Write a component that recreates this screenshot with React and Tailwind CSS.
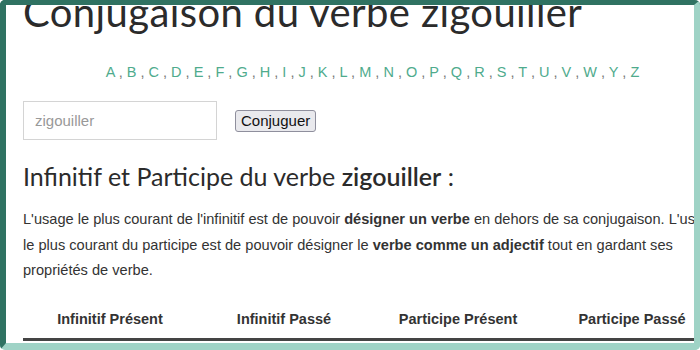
import React from 'react';

const letters = ['A', 'B', 'C', 'D', 'E', 'F', 'G', 'H', 'I', 'J', 'K', 'L', 'M', 'N', 'O', 'P', 'Q', 'R', 'S', 'T', 'U', 'V', 'W', 'Y', 'Z'];
const heads = ['Infinitif Présent', 'Infinitif Passé', 'Participe Présent', 'Participe Passé'];

export default function App() {
  return (
    <div className="w-[700px] h-[350px] bg-white">
      <div className="w-[700px] h-[350px] overflow-hidden rounded-[5px] border-t-[5px] border-l-[6px] border-r-[6px] border-b-[7px] border-t-[#2f7262] border-l-[#2f7262] border-r-[#9fd3c6] border-b-[#9fd3c6] bg-white">
        <div className="w-[700px] pl-[17px] -mt-[21px]" style={{ fontFamily: '"Liberation Sans", Arial, sans-serif' }}>
          <h1 className="text-[40px] leading-[56px] tracking-[0.4px] text-[#2b2b2b] whitespace-nowrap" style={{ fontFamily: 'Lato, "Noto Sans", sans-serif' }}>
            Conjugaison du verbe zigouiller
          </h1>

          <div className="mt-[22px] text-center text-[14.5px] leading-[20px] text-[#777] pl-[16px]">
            {letters.map((l, i) => (
              <span key={l}>
                <a className="text-[#4fab8d]">{l}</a>
                {i < letters.length - 1 && ' , '}
              </span>
            ))}
          </div>

          <div className="mt-[19px] flex items-center gap-[18px]">
            <input
              className="w-[194px] h-[39px] border border-[#d4d4d4] px-[11px] text-[15px] text-[#555] placeholder:text-[#999] outline-none"
              placeholder="zigouiller"
            />
            <button className="h-[22px] px-[5px] text-[15px] leading-[18px] text-[#111] bg-[#e9e9ed] border border-[#8f8f9d] rounded-[3px]">
              Conjuguer
            </button>
          </div>

          <h2 className="mt-[21px] text-[25px] leading-[30px] text-[#2b2b2b]" style={{ fontFamily: 'Lato, "Noto Sans", sans-serif' }}>
            Infinitif et Participe du verbe <span className="font-semibold">zigouiller</span> :
          </h2>

          <p className="mt-[16px] text-[14.6px] leading-[25.5px] text-[#333] w-[700px]">
            L'usage le plus courant de l'infinitif est de pouvoir <b>désigner un verbe</b> en dehors de sa conjugaison. L'usage le plus courant du participe est de pouvoir désigner le <b>verbe comme un adjectif</b> tout en gardant ses propriétés de verbe.
          </p>

          <div className="mt-[25px] grid grid-cols-4 w-[696px] border-b-[3px] border-[#444]">
            {heads.map((h) => (
              <div key={h} className="text-center font-bold text-[14.5px] text-[#333] pb-[8px]">{h}</div>
            ))}
          </div>
        </div>
      </div>
    </div>
  );
}
